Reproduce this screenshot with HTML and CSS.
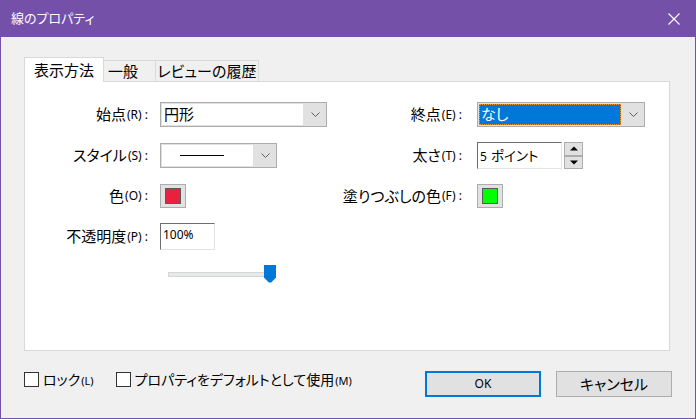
FILE: index.html
```html
<!DOCTYPE html>
<html lang="ja">
<head>
<meta charset="utf-8">
<title>線のプロパティ</title>
<link rel="stylesheet" href="styles.css">
</head>
<body>
<div class="window">
  <div class="titlebar">
    <span class="title">線のプロパティ</span>
    <span class="close"><svg width="12" height="12" viewBox="0 0 12 12"><path d="M0.5 0.5L11.5 11.5M11.5 0.5L0.5 11.5" stroke="#fff" stroke-width="1.1" fill="none"/></svg></span>
  </div>
  <div class="content">
    <div class="tabs">
      <div class="tab active">表示方法</div>
      <div class="tab t2">一般</div>
      <div class="tab t3">レビューの履歴</div>
    </div>
    <div class="panel">
      <div class="form">
        <div class="lbl">始点<span class="acc">(R) :</span></div>
        <div class="cell">
          <div class="combo w167">
            <div class="field">円形</div>
            <span class="arrow"><svg width="9" height="5" viewBox="0 0 9 5"><path d="M0.5 0.5L4.5 4.5L8.5 0.5" stroke="#606060" fill="none"/></svg></span>
          </div>
        </div>
        <div class="lbl r">終点<span class="acc">(E) :</span></div>
        <div class="cell">
          <div class="combo w168">
            <div class="field sel"><span>なし</span></div>
            <span class="arrow"><svg width="9" height="5" viewBox="0 0 9 5"><path d="M0.5 0.5L4.5 4.5L8.5 0.5" stroke="#606060" fill="none"/></svg></span>
          </div>
        </div>

        <div class="lbl">スタイル<span class="acc">(S) :</span></div>
        <div class="cell">
          <div class="combo w117">
            <div class="field"><span class="linesample"></span></div>
            <span class="arrow"><svg width="9" height="5" viewBox="0 0 9 5"><path d="M0.5 0.5L4.5 4.5L8.5 0.5" stroke="#606060" fill="none"/></svg></span>
          </div>
        </div>
        <div class="lbl r">太さ<span class="acc">(T) :</span></div>
        <div class="cell">
          <div class="textbox w85"><span class="num">5</span>&nbsp;<span class="unit">ポイント</span></div>
          <div class="spin">
            <div class="sbtn"><svg width="8" height="5" viewBox="0 0 8 5"><path d="M0 4.5L4 0.5L8 4.5Z" fill="#000"/></svg></div>
            <div class="sbtn"><svg width="8" height="5" viewBox="0 0 8 5"><path d="M0 0.5L4 4.5L8 0.5Z" fill="#000"/></svg></div>
          </div>
        </div>

        <div class="lbl">色<span class="acc">(O) :</span></div>
        <div class="cell"><div class="swatch"><i class="red"></i></div></div>
        <div class="lbl r">塗りつぶしの色<span class="acc">(F) :</span></div>
        <div class="cell"><div class="swatch"><i class="green"></i></div></div>

        <div class="lbl">不透明度<span class="acc">(P) :</span></div>
        <div class="cell"><div class="textbox w55"><span class="num">100%</span></div></div>
        <div class="cell"></div>
        <div class="cell"></div>

        <div class="cell"></div>
        <div class="cell">
          <div class="slider">
            <div class="track"></div>
            <svg class="thumb" width="12" height="18" viewBox="0 0 12 18"><path d="M0 0H12V12.5L7.2 17.6H4.8L0 12.5Z" fill="#0078d7"/></svg>
          </div>
        </div>
      </div>
    </div>
    <div class="footer">
      <div class="checks">
        <label class="check"><span class="box"></span><span class="ctext">ロック<span class="acc">(L)</span></span></label>
        <label class="check"><span class="box"></span><span class="ctext">プロパティをデフォルトとして使用<span class="acc">(M)</span></span></label>
      </div>
      <div class="buttons">
        <div class="btn ok">OK</div>
        <div class="btn">キャンセル</div>
      </div>
    </div>
  </div>
</div>
</body>
</html>
```

FILE: styles.css
```css
* { box-sizing: border-box; }
html, body { margin: 0; padding: 0; }
body {
  width: 696px;
  height: 419px;
  overflow: hidden;
  background: #f0f0f0;
  color: #000;
  font-family: "Noto Sans", "Noto Sans CJK JP", sans-serif;
  font-feature-settings: "palt";
}
.window {
  width: 696px;
  height: 419px;
  background: #f0f0f0;
  border: 1px solid #7450a8;
  border-top: none;
  display: flex;
  flex-direction: column;
}
.titlebar {
  height: 37px;
  flex: none;
  background: #7450a8;
  color: #fff;
  display: flex;
  align-items: center;
  justify-content: space-between;
  padding: 0 15px 0 10px;
  font-size: 13px;
  line-height: 1;
}
.close { display: flex; }
.content {
  flex: 1;
  padding: 20px 25px 0 23px;
}
.tabs {
  display: flex;
  align-items: flex-end;
  height: 24px;
  font-size: 15px;
  line-height: 1;
}
.tab {
  height: 21px;
  border: 1px solid #d9d9d9;
  border-bottom: none;
  border-left: none;
  background: #f0f0f0;
  display: flex;
  align-items: center;
  justify-content: center;
  padding-top: 1px;
}
.tab.active {
  position: relative;
  z-index: 1;
  width: 80px;
  height: 25px;
  margin-bottom: -1px;
  border-left: 1px solid #d9d9d9;
  background: #fff;
  padding-top: 0;
}
.tab.t2 { width: 52px; justify-content: flex-start; padding-left: 4px; }
.tab.t3 { width: 103px; }
.panel {
  height: 270px;
  background: #fff;
  border: 1px solid #d9d9d9;
  padding-top: 20px;
}
.form {
  display: grid;
  grid-template-columns: 135px 180px 137px 1fr;
  grid-template-rows: 25px 27px 24px 27px 18px;
  row-gap: 15px;
}
.lbl {
  display: flex;
  align-items: center;
  justify-content: flex-end;
  padding-right: 12px;
  font-size: 15px;
  line-height: 1;
  white-space: nowrap;
}
.lbl.r { padding-right: 15px; }
.acc { font-size: 12px; margin-left: 1px; }
.cell { display: flex; align-items: center; }
.combo {
  height: 25px;
  border: 1px solid #adadad;
  background: #e1e1e1;
  display: flex;
  padding: 1px 0 1px 1px;
}
.w167 { width: 167px; }
.w168 { width: 168px; }
.w117 { width: 117px; }
.field {
  flex: 1;
  background: #fff;
  display: flex;
  align-items: center;
  padding-left: 2px;
  font-size: 15px;
  line-height: 1;
}
.field.sel {
  background: #0078d7;
  color: #fff;
  border: 1px dotted #e89b3c;
  padding-left: 1px;
}
.arrow {
  width: 23px;
  flex: none;
  display: flex;
  align-items: center;
  justify-content: center;
  padding-left: 1px;
}
.linesample {
  display: block;
  width: 44px;
  height: 1px;
  background: #000;
  margin-left: 16px;
}
.textbox {
  height: 27px;
  background: #fff;
  border-top: 1px solid #6e6e6e;
  border-left: 1px solid #6e6e6e;
  border-right: 1px solid #e3e3e3;
  border-bottom: 1px solid #e3e3e3;
  display: flex;
  align-items: center;
  padding-left: 2px;
  padding-bottom: 2px;
  line-height: 1;
  white-space: nowrap;
}
.w85 { width: 85px; padding-bottom: 0; padding-top: 2px; }
.w55 { width: 55px; padding-bottom: 4px; }
.num { font-size: 12px; }
.unit { font-size: 13.5px; }
.spin {
  margin-left: 2px;
  width: 19px;
  height: 27px;
  display: flex;
  flex-direction: column;
}
.sbtn {
  flex: 1;
  border: 1px solid #adadad;
  background: #e1e1e1;
  display: flex;
  align-items: center;
  justify-content: center;
}
.swatch {
  width: 26px;
  height: 24px;
  border: 1px solid #adadad;
  background: #e1e1e1;
  padding: 3px 4px;
}
.swatch i {
  display: block;
  width: 100%;
  height: 100%;
  border: 1px solid #5a5a5a;
}
.swatch i.red { background: #e8213f; }
.swatch i.green { background: #00ff00; }
.slider {
  position: relative;
  width: 108px;
  height: 18px;
  margin-left: 8px;
}
.track {
  position: absolute;
  left: 0;
  right: 1px;
  top: 7px;
  height: 5px;
  background: #e7eaea;
  border: 1px solid #d6d6d6;
}
.thumb {
  position: absolute;
  right: 0;
  top: 0;
}
.footer {
  margin-top: 20px;
  display: flex;
  justify-content: space-between;
  align-items: flex-start;
  margin-right: -2px;
}
.checks {
  display: flex;
  gap: 22px;
  padding-top: 1px;
}
.check {
  display: flex;
  align-items: center;
  gap: 4px;
  font-size: 14px;
  line-height: 1;
  height: 15px;
}
.check .acc { font-size: 11px; }
.box {
  width: 15px;
  height: 15px;
  border: 1px solid #333;
  background: #fff;
}
.buttons { display: flex; gap: 15px; }
.btn {
  width: 116px;
  height: 26px;
  border: 1px solid #adadad;
  background: #e1e1e1;
  display: flex;
  align-items: center;
  justify-content: center;
  font-size: 15px;
  line-height: 1;
}
.btn.ok {
  border: 2px solid #0078d7;
  font-size: 12px;
}
```
